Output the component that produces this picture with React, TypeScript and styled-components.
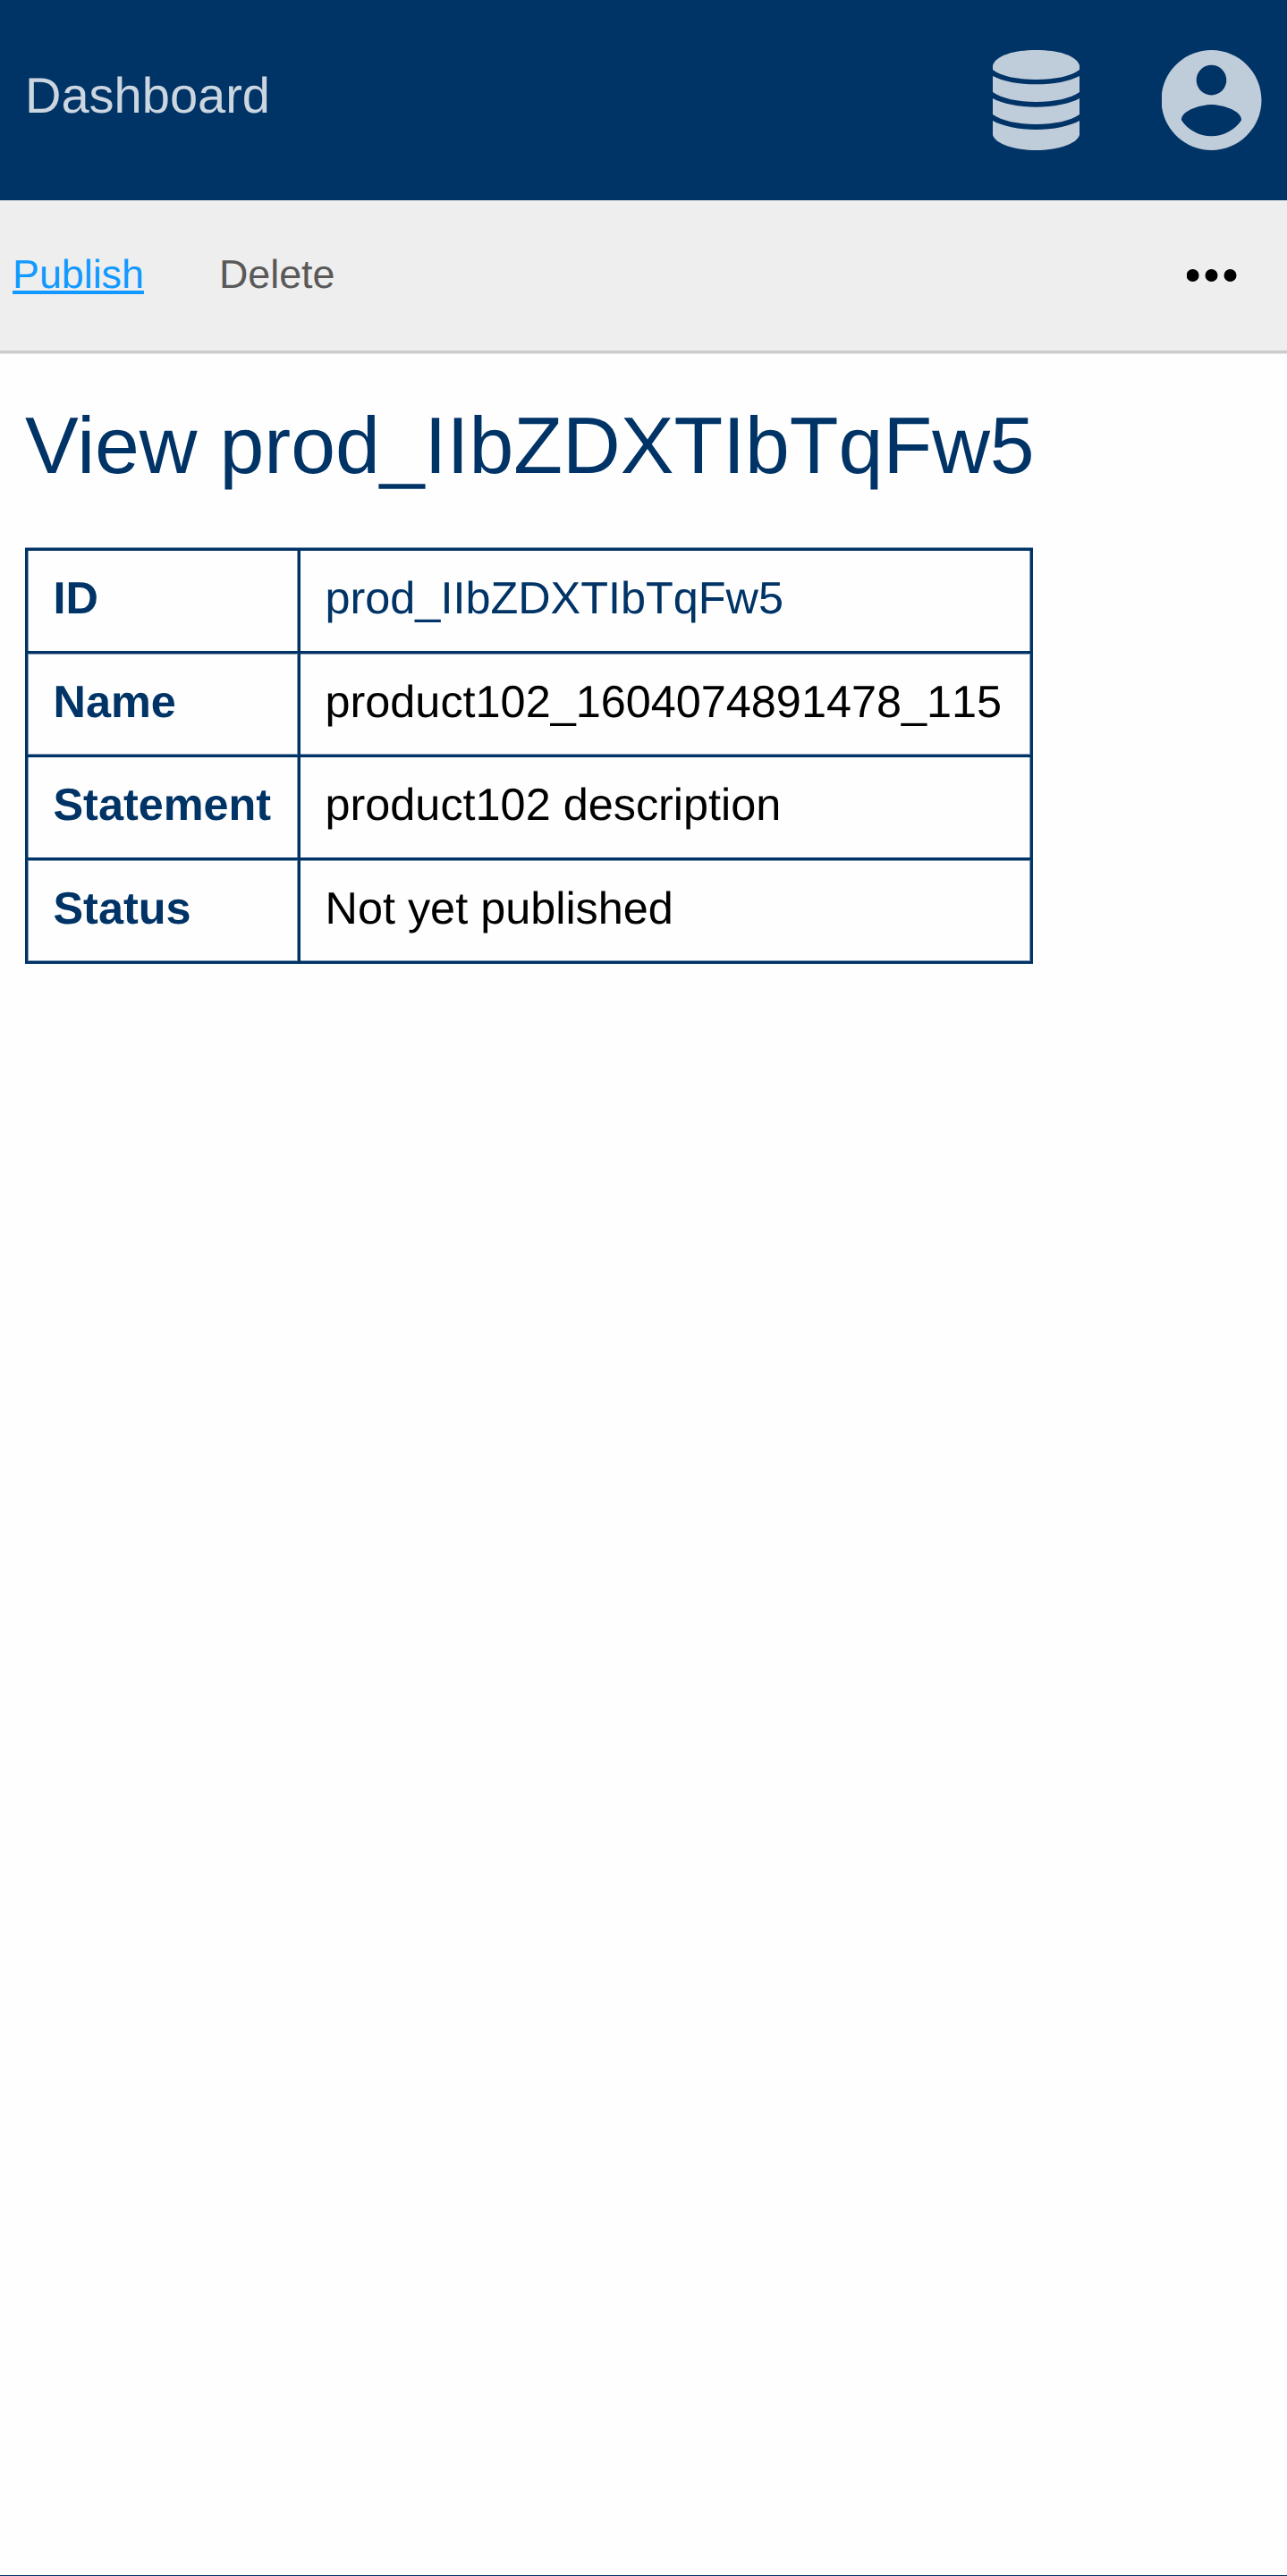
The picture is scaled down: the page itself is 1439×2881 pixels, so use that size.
import React from "react";
import styled, { createGlobalStyle } from "styled-components";

const navy = "#003366";
const soft = "#8099b2";

const GlobalStyle = createGlobalStyle`
  * { box-sizing: border-box; }
  html { background: ${navy}; }
  body {
    margin: 0;
    font-family: "Liberation Sans", Arial, sans-serif;
    text-rendering: geometricPrecision;
    color: #000;
  }
`;

const Page = styled.div`
  height: 2880px;
  background: #fefefe;
  overflow: hidden;
`;

const Header = styled.header`
  height: 224px;
  padding: 0 28px;
  display: flex;
  align-items: center;
  justify-content: space-between;
  background: ${navy};
`;

const HomeLink = styled.a`
  font-size: 56px;
  line-height: 64px;
  margin-bottom: 11px;
  color: #ccd6e0;
`;

const HeaderIcons = styled.nav`
  display: flex;
  align-items: center;
  gap: 92px;
`;

const HeaderIcon = styled.svg<{ $width: number }>`
  display: block;
  width: ${(p) => p.$width}px;
  height: 112px;
  fill: #bfccd9;
`;

const Toolbar = styled.div`
  height: 171px;
  padding: 0 56px 0 14px;
  display: flex;
  align-items: center;
  border-bottom: 3px solid #ccc;
  background: #eee;
  box-shadow: 0 1px 0 #e5e5e5;
`;

const Action = styled.a<{ $primary?: boolean }>`
  margin: 0 84px 3px 0;
  font-size: 44.8px;
  line-height: 52px;
  color: ${(p) => (p.$primary ? "#1199ff" : "#595959")};
  text-decoration: ${(p) => (p.$primary ? "underline" : "none")};
`;

const More = styled.svg`
  display: block;
  margin-left: auto;
  width: 56px;
  height: 14px;
`;

const Main = styled.main`
  padding: 54px 28px;
`;

const Title = styled.h1`
  margin: 0 0 66px;
  font-size: 89.6px;
  line-height: 98px;
  font-weight: 400;
  white-space: nowrap;
  color: ${navy};
`;

const Details = styled.dl`
  width: 1127px;
  margin: 0;
  border: 3px solid ${navy};
  font-size: 50.4px;
  line-height: 58px;
  box-shadow: 0 -1px 0 ${soft}, inset 1px 0 0 ${soft}, inset -1px 0 0 ${soft}, inset 0 -1px 0 ${soft};
`;

type Edge = "above" | "below" | "none";

const Row = styled.div<{ $height: number; $top: number; $edge: Edge }>`
  display: flex;
  height: ${(p) => p.$height}px;
  border-bottom: ${(p) => (p.$edge === "none" ? "0" : `3px solid ${navy}`)};
  box-shadow: ${(p) =>
    p.$edge === "below" ? `0 1px 0 ${soft}` : p.$edge === "above" ? `inset 0 -1px 0 ${soft}` : "none"};

  > * {
    padding-top: ${(p) => p.$top}px;
  }
`;

const Label = styled.dt`
  width: 305px;
  padding-left: 28.5px;
  border-right: 3px solid ${navy};
  box-shadow: inset -1px 0 0 ${soft};
  font-weight: 700;
  color: ${navy};
`;

const Value = styled.dd<{ $color?: string; $evenDigits?: boolean }>`
  margin: 0;
  padding-left: 27.5px;
  white-space: nowrap;
  font-kerning: ${(p) => (p.$evenDigits ? "none" : "auto")};
  color: ${(p) => p.$color ?? "#000"};
`;

interface Detail {
  label: string;
  value: string;
  height: number;
  top: number;
  edge: Edge;
  color?: string;
  evenDigits?: boolean;
}

const rows: Detail[] = [
  { label: "ID", value: "prod_IIbZDXTIbTqFw5", height: 115, top: 24, edge: "below", color: navy },
  { label: "Name", value: "product102_1604074891478_115", height: 116, top: 25, edge: "above", evenDigits: true },
  { label: "Statement", value: "product102 description", height: 115, top: 24, edge: "below" },
  { label: "Status", value: "Not yet published", height: 113, top: 25, edge: "none" },
];

export default function App() {
  return (
    <>
      <GlobalStyle />
      <Page>
        <Header>
          <HomeLink>Dashboard</HomeLink>
          <HeaderIcons>
            <HeaderIcon $width={97} viewBox="0 0 97 112">
              <path d="M0 17C4 6 23 0 48.5 0S93 6 97 17V22C88 29 70 33 48.5 33S9 29 0 22Z" />
              <path d="M0 29C11 35 29 38.3 48.5 38.3S86 35 97 29V47C87 54 69 58 48.5 58S10 54 0 47Z" />
              <path d="M0 54C11 60 29 63.7 48.5 63.7S86 60 97 54V72C87 79 69 83 48.5 83S10 79 0 72Z" />
              <path d="M0 79C11 85 29 89 48.5 89S86 85 97 79V95C94 105 73 112 48.5 112S3 105 0 95Z" />
            </HeaderIcon>
            <HeaderIcon $width={112} viewBox="2.09 2 20 20">
              <path d="M12 2C6.48 2 2 6.48 2 12s4.48 10 10 10 10-4.48 10-10S17.52 2 12 2zm0 3c1.66 0 3 1.34 3 3s-1.34 3-3 3-3-1.34-3-3 1.34-3 3-3zm0 14.2c-2.5 0-4.71-1.28-6-3.22.03-1.99 4-3.08 6-3.08 1.99 0 5.97 1.09 6 3.08-1.29 1.94-3.5 3.22-6 3.22z" />
            </HeaderIcon>
          </HeaderIcons>
        </Header>
        <Toolbar>
          <Action $primary>Publish</Action>
          <Action>Delete</Action>
          <More viewBox="0 0 56 14">
            <circle cx="6.6" cy="7" r="7" />
            <circle cx="27.5" cy="7" r="7" />
            <circle cx="48.5" cy="7" r="7" />
          </More>
        </Toolbar>
        <Main>
          <Title>View prod_IIbZDXTIbTqFw5</Title>
          <Details>
            {rows.map((row) => (
              <Row key={row.label} $height={row.height} $top={row.top} $edge={row.edge}>
                <Label>{row.label}</Label>
                <Value $color={row.color} $evenDigits={row.evenDigits}>
                  {row.value}
                </Value>
              </Row>
            ))}
          </Details>
        </Main>
      </Page>
    </>
  );
}
